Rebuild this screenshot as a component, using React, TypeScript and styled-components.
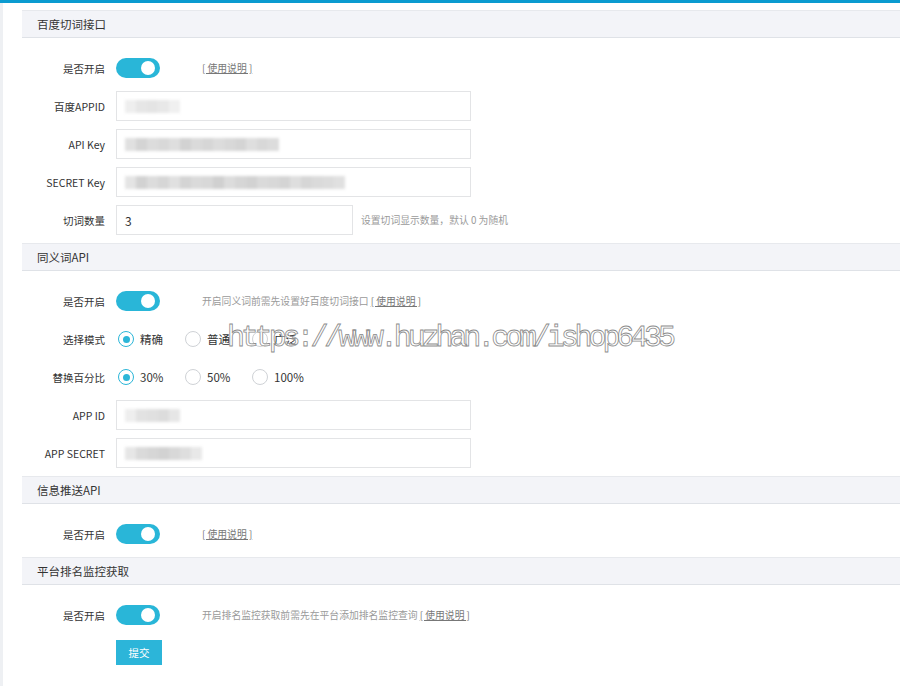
import styled, { createGlobalStyle } from "styled-components";
import { FC, PropsWithChildren } from "react";

const GlobalStyle = createGlobalStyle`
  body {
    margin: 0;
    background: #fff;
    font-family: "Noto Sans CJK SC", "Noto Sans", "Liberation Sans", sans-serif;
    color: #333;
  }
`;

const TopBar = styled.div`
  height: 3px;
  background: #0b9bd0;
`;

const Page = styled.div`
  position: relative;
  border-left: 3px solid #eef0f3;
  padding: 7px 0 20px 19px;
  min-height: 660px;
  overflow: hidden;
`;

const SectionHeader = styled.div`
  height: 26px;
  display: flex;
  align-items: center;
  padding-left: 15px;
  background: #f3f4f8;
  border-top: 1px solid #e7e9ed;
  border-bottom: 1px solid #dfe2e7;
  font-size: 11.5px;
  color: #333;
`;

const Rows = styled.div`
  display: flex;
  flex-direction: column;
  gap: 8px;
  padding: 15px 0 8px;
`;

const Row = styled.div`
  display: grid;
  grid-template-columns: 83px 1fr;
  column-gap: 11px;
  align-items: center;
  height: 30px;
`;

const Label = styled.div`
  text-align: right;
  font-size: 10.5px;
  color: #333;
`;

const Controls = styled.div`
  display: flex;
  align-items: center;
`;

const Input = styled.div<{ $w: number }>`
  width: ${(p) => p.$w}px;
  height: 30px;
  box-sizing: border-box;
  border: 1px solid #e3e4e6;
  background: #fff;
  display: flex;
  align-items: center;
  padding-left: 8px;
  font-size: 12px;
  color: #333;
`;

const Masked = styled.div`
  display: flex;
  align-items: center;
  filter: blur(1.4px);
`;

const MaskCell = styled.span<{ $shade: string }>`
  display: inline-block;
  width: 11px;
  height: 13px;
  background: ${(p) => p.$shade};
`;

const Hint = styled.span<{ $gap: number }>`
  margin-left: ${(p) => p.$gap}px;
  font-size: 9.8px;
  color: #9a9a9a;
  white-space: nowrap;
`;

const HelpLink = styled.a`
  font-size: 9.8px;
  color: #777;
  text-decoration: underline;
  cursor: pointer;
`;

const Track = styled.div`
  position: relative;
  width: 44px;
  height: 20px;
  border-radius: 10px;
  background: #29b6d8;
  flex-shrink: 0;
`;

const Knob = styled.span`
  position: absolute;
  right: 5px;
  top: 3px;
  width: 14px;
  height: 14px;
  border-radius: 50%;
  background: #fff;
`;

const Option = styled.label`
  display: flex;
  align-items: center;
  gap: 6px;
  width: 65px;
  margin-left: 2px;
  font-size: 11.5px;
  color: #333;
`;

const Dot = styled.span<{ $on?: boolean }>`
  width: 16px;
  height: 16px;
  box-sizing: border-box;
  border-radius: 50%;
  border: 1.5px solid ${(p) => (p.$on ? "#2bb6d8" : "#cfd2d6")};
  display: flex;
  align-items: center;
  justify-content: center;
  &::after {
    content: "";
    width: 7px;
    height: 7px;
    border-radius: 50%;
    background: ${(p) => (p.$on ? "#2bb6d8" : "transparent")};
  }
`;

const SubmitRow = styled.div`
  padding-left: 94px;
`;

const Submit = styled.button`
  width: 46px;
  height: 25px;
  border: none;
  background: #2cb5d9;
  color: #fff;
  font-size: 10.5px;
  font-family: inherit;
  padding: 0;
`;

const Watermark = styled.div`
  position: absolute;
  left: 224px;
  top: 318px;
  font-family: "Liberation Mono", monospace;
  font-size: 30px;
  letter-spacing: -4.1px;
  color: rgba(255, 255, 255, 0.35);
  -webkit-text-stroke: 0.8px #8c8c8c;
  white-space: nowrap;
  pointer-events: none;
`;

const Toggle: FC = () => (
  <Track>
    <Knob />
  </Track>
);

const Section: FC<PropsWithChildren<{ title: string }>> = ({ title, children }) => (
  <>
    <SectionHeader>{title}</SectionHeader>
    <Rows>{children}</Rows>
  </>
);

const Field: FC<PropsWithChildren<{ label: string }>> = ({ label, children }) => (
  <Row>
    <Label>{label}</Label>
    <Controls>{children}</Controls>
  </Row>
);

// blurred secret values, one shade per cell
const MaskedValue: FC<{ shades: string[] }> = ({ shades }) => (
  <Masked>
    {shades.map((s, i) => (
      <MaskCell key={i} $shade={s} />
    ))}
  </Masked>
);

const Radios: FC<{ items: string[]; value: number }> = ({ items, value }) => (
  <>
    {items.map((t, i) => (
      <Option key={t}>
        <Dot $on={i === value} />
        {t}
      </Option>
    ))}
  </>
);

const light = ["#eeeeee", "#e6e6e6", "#e4e4e4", "#e8e8e8", "#f0f0f0"];
const apiKey = ["#e0e0e0", "#d4d4d4", "#dcdcdc", "#d8d8d8", "#dedede", "#d2d2d2", "#dadada", "#d6d6d6", "#dcdcdc", "#d8d8d8", "#d4d4d4", "#dedede", "#d8d8d8", "#dcdcdc"];
const secret = ["#e4e4e4", "#d2d2d2", "#dcdcdc", "#d6d6d6", "#e0e0e0", "#d4d4d4", "#dadada", "#d8d8d8", "#d0d0d0", "#dcdcdc", "#d6d6d6", "#d2d2d2", "#dadada", "#d8d8d8", "#d4d4d4", "#dedede", "#d6d6d6", "#dadada", "#dcdcdc", "#e0e0e0"];
const appId = ["#eeeeee", "#e2e2e2", "#e0e0e0", "#dcdcdc", "#e6e6e6"];
const appSecret = ["#e6e6e6", "#dadada", "#d6d6d6", "#d2d2d2", "#d8d8d8", "#dedede", "#e8e8e8"];

export default function App() {
  return (
    <>
      <GlobalStyle />
      <TopBar />
      <Page>
        <Section title="百度切词接口">
          <Field label="是否开启">
            <Toggle />
            <Hint $gap={42}>
              <HelpLink>[ 使用说明 ]</HelpLink>
            </Hint>
          </Field>
          <Field label="百度APPID">
            <Input $w={355}>
              <MaskedValue shades={light} />
            </Input>
          </Field>
          <Field label="API Key">
            <Input $w={355}>
              <MaskedValue shades={apiKey} />
            </Input>
          </Field>
          <Field label="SECRET Key">
            <Input $w={355}>
              <MaskedValue shades={secret} />
            </Input>
          </Field>
          <Field label="切词数量">
            <Input $w={237}>3</Input>
            <Hint $gap={8}>设置切词显示数量，默认 0 为随机</Hint>
          </Field>
        </Section>

        <Section title="同义词API">
          <Field label="是否开启">
            <Toggle />
            <Hint $gap={42}>
              开启同义词前需先设置好百度切词接口 <HelpLink>[ 使用说明 ]</HelpLink>
            </Hint>
          </Field>
          <Field label="选择模式">
            <Radios items={["精确", "普通", "广泛"]} value={0} />
          </Field>
          <Field label="替换百分比">
            <Radios items={["30%", "50%", "100%"]} value={0} />
          </Field>
          <Field label="APP ID">
            <Input $w={355}>
              <MaskedValue shades={appId} />
            </Input>
          </Field>
          <Field label="APP SECRET">
            <Input $w={355}>
              <MaskedValue shades={appSecret} />
            </Input>
          </Field>
        </Section>

        <Section title="信息推送API">
          <Field label="是否开启">
            <Toggle />
            <Hint $gap={42}>
              <HelpLink>[ 使用说明 ]</HelpLink>
            </Hint>
          </Field>
        </Section>

        <Section title="平台排名监控获取">
          <Field label="是否开启">
            <Toggle />
            <Hint $gap={42}>
              开启排名监控获取前需先在平台添加排名监控查询 <HelpLink>[ 使用说明 ]</HelpLink>
            </Hint>
          </Field>
          <SubmitRow>
            <Submit>提交</Submit>
          </SubmitRow>
        </Section>

        <Watermark>https://www.huzhan.com/ishop6435</Watermark>
      </Page>
    </>
  );
}
